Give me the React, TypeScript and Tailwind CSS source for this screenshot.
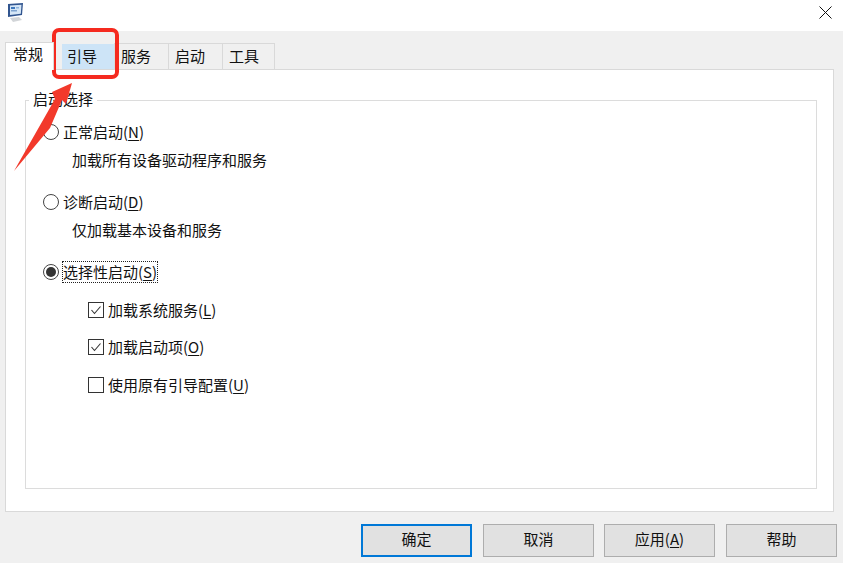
import type { ReactNode } from "react";

const font = "[font-family:'Noto_Sans_CJK_SC','Liberation_Sans',sans-serif]";

function Radio({ on }: { on?: boolean }) {
  return (
    <span className="flex h-4 w-4 shrink-0 items-center justify-center rounded-full border border-[#444] bg-white">
      {on && <span className="h-2.5 w-2.5 rounded-full bg-[#333]" />}
    </span>
  );
}

function Check({ on }: { on?: boolean }) {
  return (
    <span className="flex h-4 w-4 shrink-0 items-center justify-center border border-[#333] bg-white">
      {on && (
        <svg width="12" height="12" viewBox="0 0 12 12" fill="none" stroke="#333" strokeWidth="1.1">
          <path d="M1.5 6 L4.5 9.5 L10.5 2.5" />
        </svg>
      )}
    </span>
  );
}

function Label({ name, k }: { name: string; k: string }) {
  return (
    <span>
      {name}(<span className="underline underline-offset-2">{k}</span>)
    </span>
  );
}

function Btn({ children, cls }: { children: ReactNode; cls: string }) {
  return (
    <button className={"flex h-[33px] items-center justify-center bg-[#e1e1e1] pb-[3px] text-[15px] text-[#111] " + cls}>
      {children}
    </button>
  );
}

function Tab({ children, w }: { children: string; w: string }) {
  return (
    <div className={"-ml-px flex h-[26px] items-center border border-b-0 border-[#d9d9d9] bg-[#f0f0f0] pb-[2px] pl-[6px] " + w}>
      {children}
    </div>
  );
}

export default function App() {
  return (
    <div className={"relative flex h-[563px] w-[843px] flex-col overflow-hidden bg-[#f0f0f0] text-[15px] leading-[24px] text-[#111] " + font}>
      <header className="flex h-[31px] shrink-0 items-start justify-between bg-white">
        <svg className="ml-[5px] mt-[2px]" width="20" height="21" viewBox="0 0 20 21">
          <path d="M3 2 L18 1 L17 13 L3 15 Z" fill="#31558f" />
          <path d="M5 3.5 L16.5 2.8 L15.8 11.8 L5 13 Z" fill="#d5e6f6" />
          <rect x="6" y="5" width="4" height="2" fill="#3f78bd" />
          <rect x="6" y="8" width="6" height="1.5" fill="#7fa3cf" />
          <rect x="11" y="5" width="3" height="1.5" fill="#8fb4dc" />
          <path d="M5 16 L14 15 L17 18 L8 20 Z" fill="#d2d5d8" />
        </svg>
        <svg className="mr-[11px] mt-[6px]" width="13" height="13" viewBox="0 0 13 13" stroke="#111" strokeWidth="1">
          <path d="M.5.5l12 12M12.5.5l-12 12" />
        </svg>
      </header>

      <div className="ml-[5px] mt-[11px] flex h-[27px] items-end">
        <div className="z-10 -mb-px flex h-[28px] w-[49px] items-start border border-b-0 border-[#d9d9d9] bg-white pl-[7px] leading-[22px]">常规</div>
        <div className="ml-[8px] flex h-[25px] w-[53px] items-center bg-[#cde4f7] pb-[2px] pl-[5px]">引导</div>
        <Tab w="w-[55px]">服务</Tab>
        <Tab w="w-[55px]">启动</Tab>
        <Tab w="w-[53px]">工具</Tab>
      </div>

      <main className="mx-[5px] mr-[9px] h-[443px] border border-[#d9d9d9] bg-white pl-[19px] pr-[16px] pt-[30px]">
        <section className="relative h-[389px] border border-[#dcdcdc] pl-[17px] pt-[19px]">
          <div className="absolute -top-[14px] left-[3px] bg-white px-[4px] leading-[24px]">启动选择</div>
          <div className="flex h-[24px] items-center gap-[4px]">
            <Radio />
            <Label name="正常启动" k="N" />
          </div>
          <div className="ml-[29px] mt-[4px]">加载所有设备驱动程序和服务</div>
          <div className="mt-[18px] flex h-[24px] items-center gap-[4px]">
            <Radio />
            <Label name="诊断启动" k="D" />
          </div>
          <div className="ml-[29px] mt-[4px]">仅加载基本设备和服务</div>
          <div className="mt-[18px] flex h-[24px] items-center gap-[3px]">
            <Radio on />
            <span className="border border-dotted border-[#222] leading-[20px]">
              <Label name="选择性启动" k="S" />
            </span>
          </div>
          <div className="ml-[45px] mt-[14px] flex flex-col">
            <div className="flex h-[24px] items-center gap-[4px]"><Check on /><Label name="加载系统服务" k="L" /></div>
            <div className="mt-[13px] flex h-[24px] items-center gap-[4px]"><Check on /><Label name="加载启动项" k="O" /></div>
            <div className="mt-[14px] flex h-[24px] items-center gap-[4px]"><Check /><Label name="使用原有引导配置" k="U" /></div>
          </div>
        </section>
      </main>

      <footer className="ml-[361px] mt-[12px] flex">
        <Btn cls="w-[111px] border-2 border-[#0078d7]">确定</Btn>
        <Btn cls="ml-[11px] w-[111px] border border-[#adadad]">取消</Btn>
        <Btn cls="ml-[10px] w-[111px] border border-[#adadad]">应用(<span className="underline underline-offset-2">A</span>)</Btn>
        <Btn cls="ml-[11px] w-[111px] border border-[#adadad]">帮助</Btn>
      </footer>

      <svg className="pointer-events-none absolute left-0 top-0" width="843" height="563" viewBox="0 0 843 563" fill="none">
        <rect x="54" y="30" width="63" height="47" rx="5" stroke="#f52a1f" strokeWidth="4" />
        <path d="M14 171 L55 99 L52 92 L72 83 L66 104 L62 100 L50 128 Z" fill="#f2392b" />
      </svg>
    </div>
  );
}
